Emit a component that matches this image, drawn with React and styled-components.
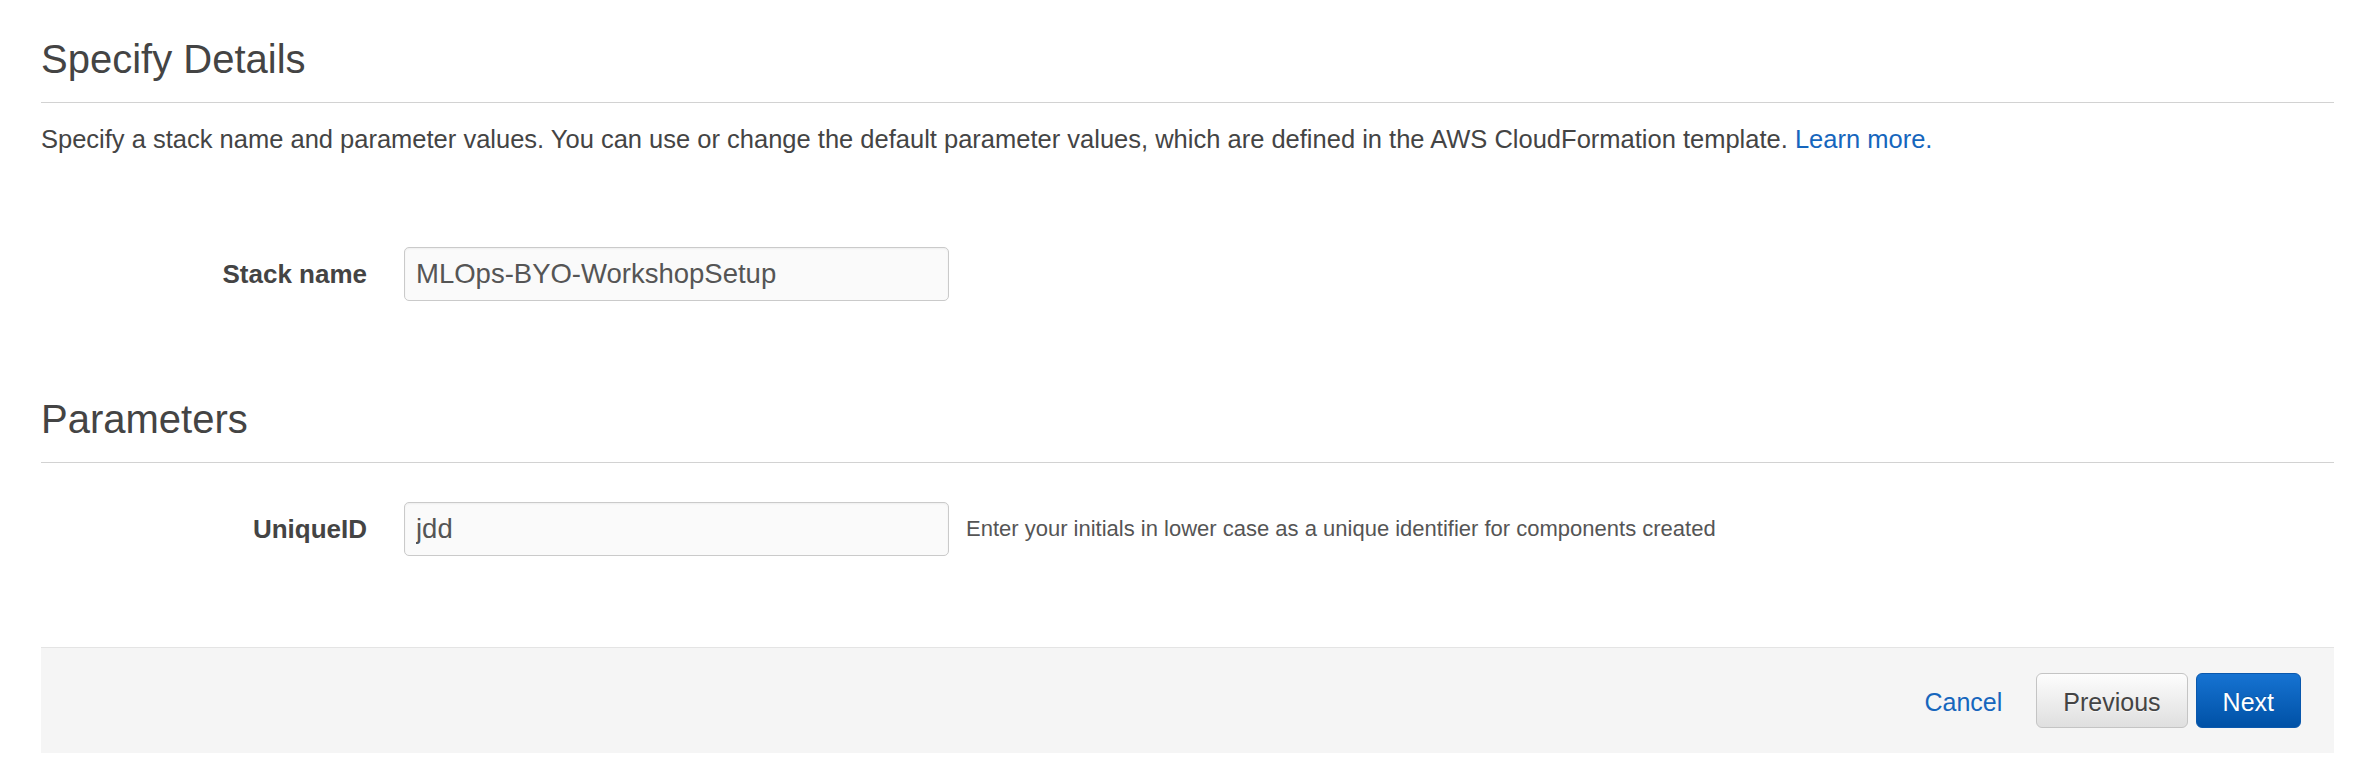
import React, { useState } from "react";
import styled, { createGlobalStyle } from "styled-components";

const GlobalStyle = createGlobalStyle`
    body {
        margin: 0;
        background: #fff;
        font-family: "Liberation Sans", Arial, sans-serif;
        color: #444;
    }
`;

const Page = styled.div`
    padding: 0 24px 30px 41px;
`;

const SectionTitle = styled.h2`
    margin: ${(p) => p.$top}px 0 0;
    padding-bottom: 21px;
    border-bottom: 1px solid #d2d2d2;
    font-size: 40px;
    font-weight: 400;
    line-height: 44px;
    color: #444;
`;

const Intro = styled.p`
    margin: 18px 0 0;
    font-size: 25.5px;
    line-height: 36px;
    color: #444;
`;

const Link = styled.a`
    color: #1666bd;
    text-decoration: none;
    cursor: pointer;
`;

const FieldRow = styled.div`
    display: grid;
    grid-template-columns: 326px 545px auto;
    column-gap: 37px;
    align-items: center;
    margin-top: ${(p) => p.$top}px;
`;

const FieldLabel = styled.label`
    text-align: right;
    font-size: 26px;
    font-weight: 700;
    color: #444;
`;

const InputWrap = styled.div`
    display: flex;
    align-items: center;
    gap: 17px;
    grid-column: 2 / 4;
`;

const TextInput = styled.input`
    box-sizing: border-box;
    width: 545px;
    height: 54px;
    padding: 0 11px;
    border: 1px solid #cacaca;
    border-radius: 5px;
    background: #fafafa;
    box-shadow: inset 0 1px 2px rgba(0, 0, 0, 0.05);
    font-family: inherit;
    font-size: 27.5px;
    color: #555;
    outline: none;
`;

const HelpText = styled.span`
    font-size: 22px;
    color: #555;
    white-space: nowrap;
`;

const Footer = styled.div`
    box-sizing: border-box;
    height: 106px;
    margin-top: 91px;
    padding-right: 33px;
    display: flex;
    justify-content: flex-end;
    align-items: center;
    background: #f5f5f5;
    border-top: 1px solid #e4e4e4;
`;

const CancelLink = styled(Link)`
    font-size: 25px;
    margin-right: 34px;
    margin-top: 4px;
`;

const Button = styled.button`
    box-sizing: border-box;
    height: 55px;
    padding: 3px 26px 0;
    margin-left: ${(p) => (p.$primary ? "8px" : "0")};
    border-radius: 6px;
    font-family: inherit;
    font-size: 25px;
    cursor: pointer;
    border: 1px solid ${(p) => (p.$primary ? "#0a58ad" : "#c4c4c4")};
    color: ${(p) => (p.$primary ? "#fff" : "#444")};
    background: ${(p) =>
        p.$primary
            ? "linear-gradient(#1673d2, #0051a6)"
            : "linear-gradient(#fdfdfd, #dfdfdf)"};
    text-shadow: ${(p) =>
        p.$primary ? "0 -1px 0 rgba(0,0,0,0.15)" : "0 1px 0 rgba(255,255,255,0.6)"};
`;

function App() {
    const [stackName, setStackName] = useState("MLOps-BYO-WorkshopSetup");
    const [uniqueId, setUniqueId] = useState("jdd");

    return (
        <Page>
            <GlobalStyle />
            <SectionTitle $top={37}>Specify Details</SectionTitle>
            <Intro>
                Specify a stack name and parameter values. You can use or
                change the default parameter values, which are defined in the
                AWS CloudFormation template. <Link>Learn more.</Link>
            </Intro>

            <FieldRow $top={90}>
                <FieldLabel>Stack name</FieldLabel>
                <InputWrap>
                    <TextInput
                        value={stackName}
                        onChange={(e) => setStackName(e.target.value)}
                    />
                </InputWrap>
            </FieldRow>

            <SectionTitle $top={96}>Parameters</SectionTitle>

            <FieldRow $top={39}>
                <FieldLabel>UniqueID</FieldLabel>
                <InputWrap>
                    <TextInput
                        value={uniqueId}
                        onChange={(e) => setUniqueId(e.target.value)}
                    />
                    <HelpText>
                        Enter your initials in lower case as a unique
                        identifier for components created
                    </HelpText>
                </InputWrap>
            </FieldRow>

            <Footer>
                <CancelLink>Cancel</CancelLink>
                <Button>Previous</Button>
                <Button $primary>Next</Button>
            </Footer>
        </Page>
    );
}

export default App;
